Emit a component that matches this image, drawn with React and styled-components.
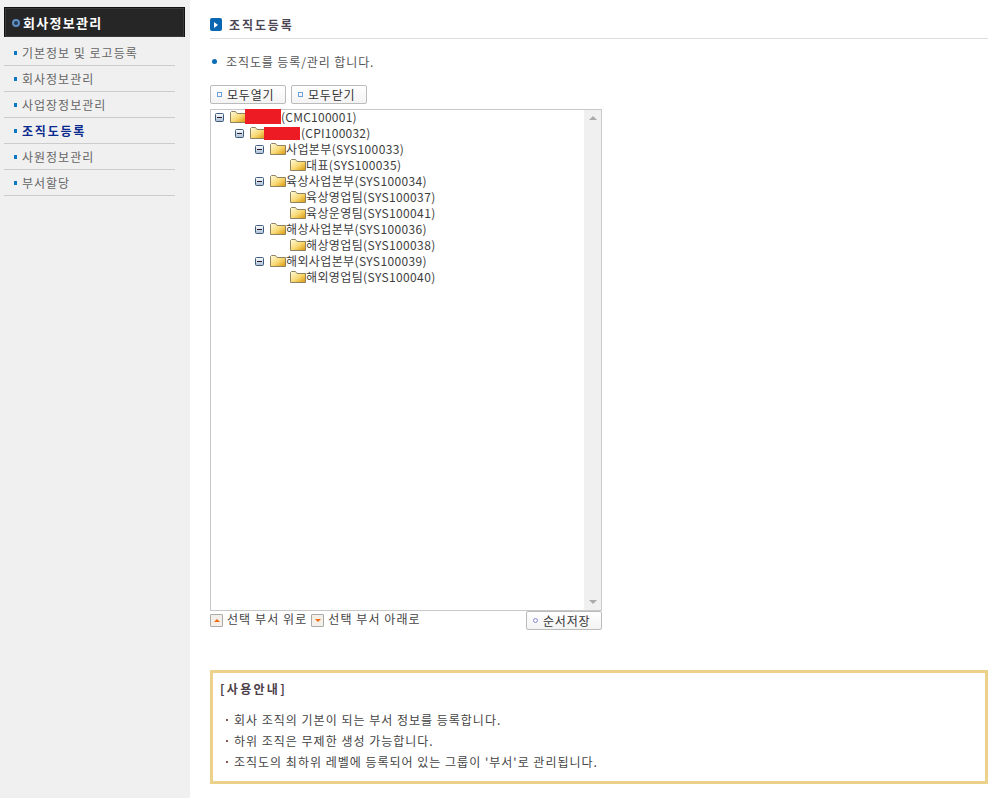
import React from 'react';
import styled, { createGlobalStyle } from 'styled-components';

const Global = createGlobalStyle`
  html, body { margin: 0; padding: 0; background: #fff; }
  body { font-family: "Noto Sans CJK KR", "Liberation Sans", sans-serif; font-size: 12px; color: #444; }
`;
const Page = styled.div`display: flex; width: 1000px; height: 798px; overflow: hidden;`;
const Sidebar = styled.aside`width: 190px; flex: none; background: #f0f0f0; padding: 7px 0 0 4px; box-sizing: border-box;`;
const SideHead = styled.div`
  width: 181px; height: 30px; box-sizing: border-box; display: flex; align-items: center; gap: 3px; padding-left: 7px;
  background: #262626; border: 1px solid #111; border-bottom: 0; box-shadow: inset 0 0 0 1px #3a3a3a;
  color: #fff; font-weight: 700; font-size: 13px; letter-spacing: 1.3px;
`;
const HeadDot = styled.span`width: 4px; height: 4px; border-radius: 50%; background: #26384e; border: 2px solid #5d8fc4; box-sizing: content-box; flex: none; margin-left: 0;`;
const SideList = styled.ul`list-style: none; margin: 3px 0 0; padding: 0; width: 171px;`;
const SideItem = styled.li`
  height: 26px; box-sizing: border-box; border-bottom: 1px solid #ccc; display: flex; align-items: center; gap: 5px; padding: 0 0 0 10px;
  font-size: 12px; color: ${p => p.$active ? '#0b2a8f' : '#666'}; font-weight: ${p => p.$active ? 700 : 400};
  letter-spacing: ${p => p.$active ? 1.8 : 1}px;
`;
const SideBullet = styled.i`width: 3px; height: 4px; background: #0a78c2; display: block;`;
const Main = styled.main`flex: none; width: 778px; margin-left: 20px; display: flex; flex-direction: column;`;
const TitleBar = styled.div`height: 39px; box-sizing: border-box; padding: 16px 0 0; border-bottom: 1px solid #ddd; display: flex; align-items: flex-start; gap: 7px;`;
const TitleIcon = styled.span`width: 12px; height: 13px; margin-top: 2px; border-radius: 2px; background: #0a66b0; display: flex; align-items: center; justify-content: center;`;
const TitleText = styled.h2`margin: 0; font-size: 12px; line-height: 17px; font-weight: 700; color: #4d4654; letter-spacing: 1.9px;`;
const Desc = styled.p`margin: 14px 0 0; height: 17px; display: flex; align-items: center; gap: 9px; padding-left: 2px; line-height: 17px; font-size: 12px; color: #555; letter-spacing: .9px;`;
const DescDot = styled.i`width: 5px; height: 5px; border-radius: 50%; background: #0a6cb4; display: block;`;
const Btns = styled.div`display: flex; gap: 5px; margin-top: 15px;`;
const Btn = styled.button`
  height: 19px; width: ${p => p.$w}px; padding: 0 0 0 6px; display: flex; align-items: center; gap: 5px; box-sizing: border-box;
  border: 1px solid #bbb; border-radius: 2px; background: linear-gradient(#fff, #f3f3f3);
  font: 12px "Noto Sans CJK KR", sans-serif; color: #333; letter-spacing: .8px;
`;
const BtnMark = styled.i`width: 3px; height: 3px; border: 1px solid ${p => p.$c}; display: block; border-radius: ${p => p.$round ? '50%' : '0'};`;
const TreeBox = styled.div`margin-top: 5px; width: 392px; height: 502px; box-sizing: border-box; border: 1px solid #c8c8c8; display: flex;`;
const TreeList = styled.div`flex: 1; margin-top: -1px; min-width: 0;`;
const Row = styled.div`height: 16px; display: flex; align-items: center; padding-left: ${p => 4 + p.$level * 20}px; font-size: 12px; color: #3d3d3d; white-space: nowrap;`;
const RowLabel = styled.span`margin-bottom: 2px; letter-spacing: ${p => p.$latin ? '.25px' : '.38px'};`;
const Toggle = styled.svg`width: 9px; height: 9px; margin-right: 6px; flex: none;`;
const Spacer = styled.span`width: 15px; flex: none;`;
const Folder = styled.svg`width: 16px; height: 12px; flex: none;`;
const Redact = styled.span`display: block; width: 36px; height: ${p => p.$h}px; background: #ed1c24; margin: ${p => p.$m}; flex: none;`;
const Scroll = styled.div`width: 17px; background: #f0f0f0; display: flex; flex-direction: column; justify-content: space-between; align-items: center; padding: 6px 0 6px; box-sizing: border-box;`;
const Arrow = styled.i`display: block; width: 0; height: 0; border-left: 4px solid transparent; border-right: 4px solid transparent; ${p => p.$up ? 'border-bottom: 4px solid #aaa;' : 'border-top: 4px solid #aaa;'}`;
const FootBar = styled.div`width: 392px; display: flex; align-items: flex-start; height: 20px;`;
const MoveLabel = styled.span`font-size: 12px; line-height: 17px; color: #444; margin: -1px 4px 0 4px; letter-spacing: 1.08px;`;
const MoveBtn = styled.span`width: 11px; height: 11px; margin-top: 3px; border: 1px solid #aaa; border-radius: 1px; background: #f4efe8; display: flex; align-items: center; justify-content: center;`;
const Tri = styled.i`display: block; width: 0; height: 0; border-left: 3px solid transparent; border-right: 3px solid transparent; ${p => p.$up ? 'border-bottom: 3px solid #f26a10;' : 'border-top: 3px solid #f26a10;'}`;
const SaveBtn = styled(Btn)`margin-left: auto; margin-top: 0;`;
const Guide = styled.section`margin-top: 39px; width: 778px; height: 114px; box-sizing: border-box; border: 3px solid #ebd18a; padding: 7px 0 0 7px;`;
const GuideTitle = styled.h3`margin: 0 0 11px; font-size: 12px; line-height: 18px; font-weight: 700; color: #4d4048; letter-spacing: 2.3px;`;
const GuideLine = styled.p`margin: 0; height: 21px; display: flex; align-items: center; gap: 6px; line-height: 21px; font-size: 12px; color: #444; padding-left: 6px; letter-spacing: 1px;`;
const GuideBullet = styled.i`width: 2px; height: 2px; background: #8a5a50; display: block;`;

const FolderIcon = () => (
  <Folder viewBox="0 0 16 12">
    <defs>
      <linearGradient id="fg" x1="0" y1="0" x2="1" y2="1">
        <stop offset="0" stopColor="#fffbe0" /><stop offset=".55" stopColor="#f8d870" /><stop offset="1" stopColor="#d89408" />
      </linearGradient>
    </defs>
    <path d="M.5 11.5V1.5L1.5.5h4l1.5 2h8.500v9z" fill="url(#fg)" stroke="#8f8260" />
  </Folder>
);
const ToggleIcon = () => (
  <Toggle viewBox="0 0 9 9">
    <defs>
      <linearGradient id="tg" x1="0" y1="0" x2="0" y2="1">
        <stop offset="0" stopColor="#fff" /><stop offset="1" stopColor="#a9bcd4" />
      </linearGradient>
    </defs>
    <rect x=".5" y=".5" width="8" height="8" rx="1" fill="url(#tg)" stroke="#3e5a7c" />
    <path d="M2 4.500h5" stroke="#223" />
  </Toggle>
);

const tree = [
  { l: 0, t: '(CMC100001)', open: 1, red: { h: 15, m: '-1px 0 0 -1px' } },
  { l: 1, t: '(CPI100032)', open: 1, red: { h: 13, m: '0 1px 0 -2px' } },
  { l: 2, t: '사업본부(SYS100033)', open: 1 },
  { l: 3, t: '대표(SYS100035)' },
  { l: 2, t: '육상사업본부(SYS100034)', open: 1 },
  { l: 3, t: '육상영업팀(SYS100037)' },
  { l: 3, t: '육상운영팀(SYS100041)' },
  { l: 2, t: '해상사업본부(SYS100036)', open: 1 },
  { l: 3, t: '해상영업팀(SYS100038)' },
  { l: 2, t: '해외사업본부(SYS100039)', open: 1 },
  { l: 3, t: '해외영업팀(SYS100040)' },
];
const menu = ['기본정보 및 로고등록', '회사정보관리', '사업장정보관리', '조직도등록', '사원정보관리', '부서할당'];
const guide = ['회사 조직의 기본이 되는 부서 정보를 등록합니다.', '하위 조직은 무제한 생성 가능합니다.', "조직도의 최하위 레벨에 등록되어 있는 그룹이 '부서'로 관리됩니다."];

export default function App() {
  return (
    <Page>
      <Global />
      <Sidebar>
        <SideHead><HeadDot />회사정보관리</SideHead>
        <SideList>
          {menu.map(m => <SideItem key={m} $active={m === '조직도등록'}><SideBullet />{m}</SideItem>)}
        </SideList>
      </Sidebar>
      <Main>
        <TitleBar>
          <TitleIcon><svg width="4" height="6" viewBox="0 0 4 6"><path d="M0 0l4 3-4 3z" fill="#fff" /></svg></TitleIcon>
          <TitleText>조직도등록</TitleText>
        </TitleBar>
        <Desc><DescDot />조직도를 등록/관리 합니다.</Desc>
        <Btns>
          <Btn $w={76}><BtnMark $c="#6f9fd8" />모두열기</Btn>
          <Btn $w={76}><BtnMark $c="#6f9fd8" />모두닫기</Btn>
        </Btns>
        <TreeBox>
          <TreeList>
            {tree.map(r => (
              <Row key={r.t} $level={r.l}>
                {r.open ? <ToggleIcon /> : <Spacer />}
                <FolderIcon />
                {r.red && <Redact $h={r.red.h} $m={r.red.m} />}
                <RowLabel $latin={!!r.red}>{r.t}</RowLabel>
              </Row>
            ))}
          </TreeList>
          <Scroll><Arrow $up /><Arrow /></Scroll>
        </TreeBox>
        <FootBar>
          <MoveBtn><Tri $up /></MoveBtn>
          <MoveLabel>선택 부서 위로</MoveLabel>
          <MoveBtn><Tri /></MoveBtn>
          <MoveLabel>선택 부서 아래로</MoveLabel>
          <SaveBtn $w={76}><BtnMark $c="#8a8ae0" $round />순서저장</SaveBtn>
        </FootBar>
        <Guide>
          <GuideTitle>[사용안내]</GuideTitle>
          {guide.map(g => <GuideLine key={g}><GuideBullet />{g}</GuideLine>)}
        </Guide>
      </Main>
    </Page>
  );
}
